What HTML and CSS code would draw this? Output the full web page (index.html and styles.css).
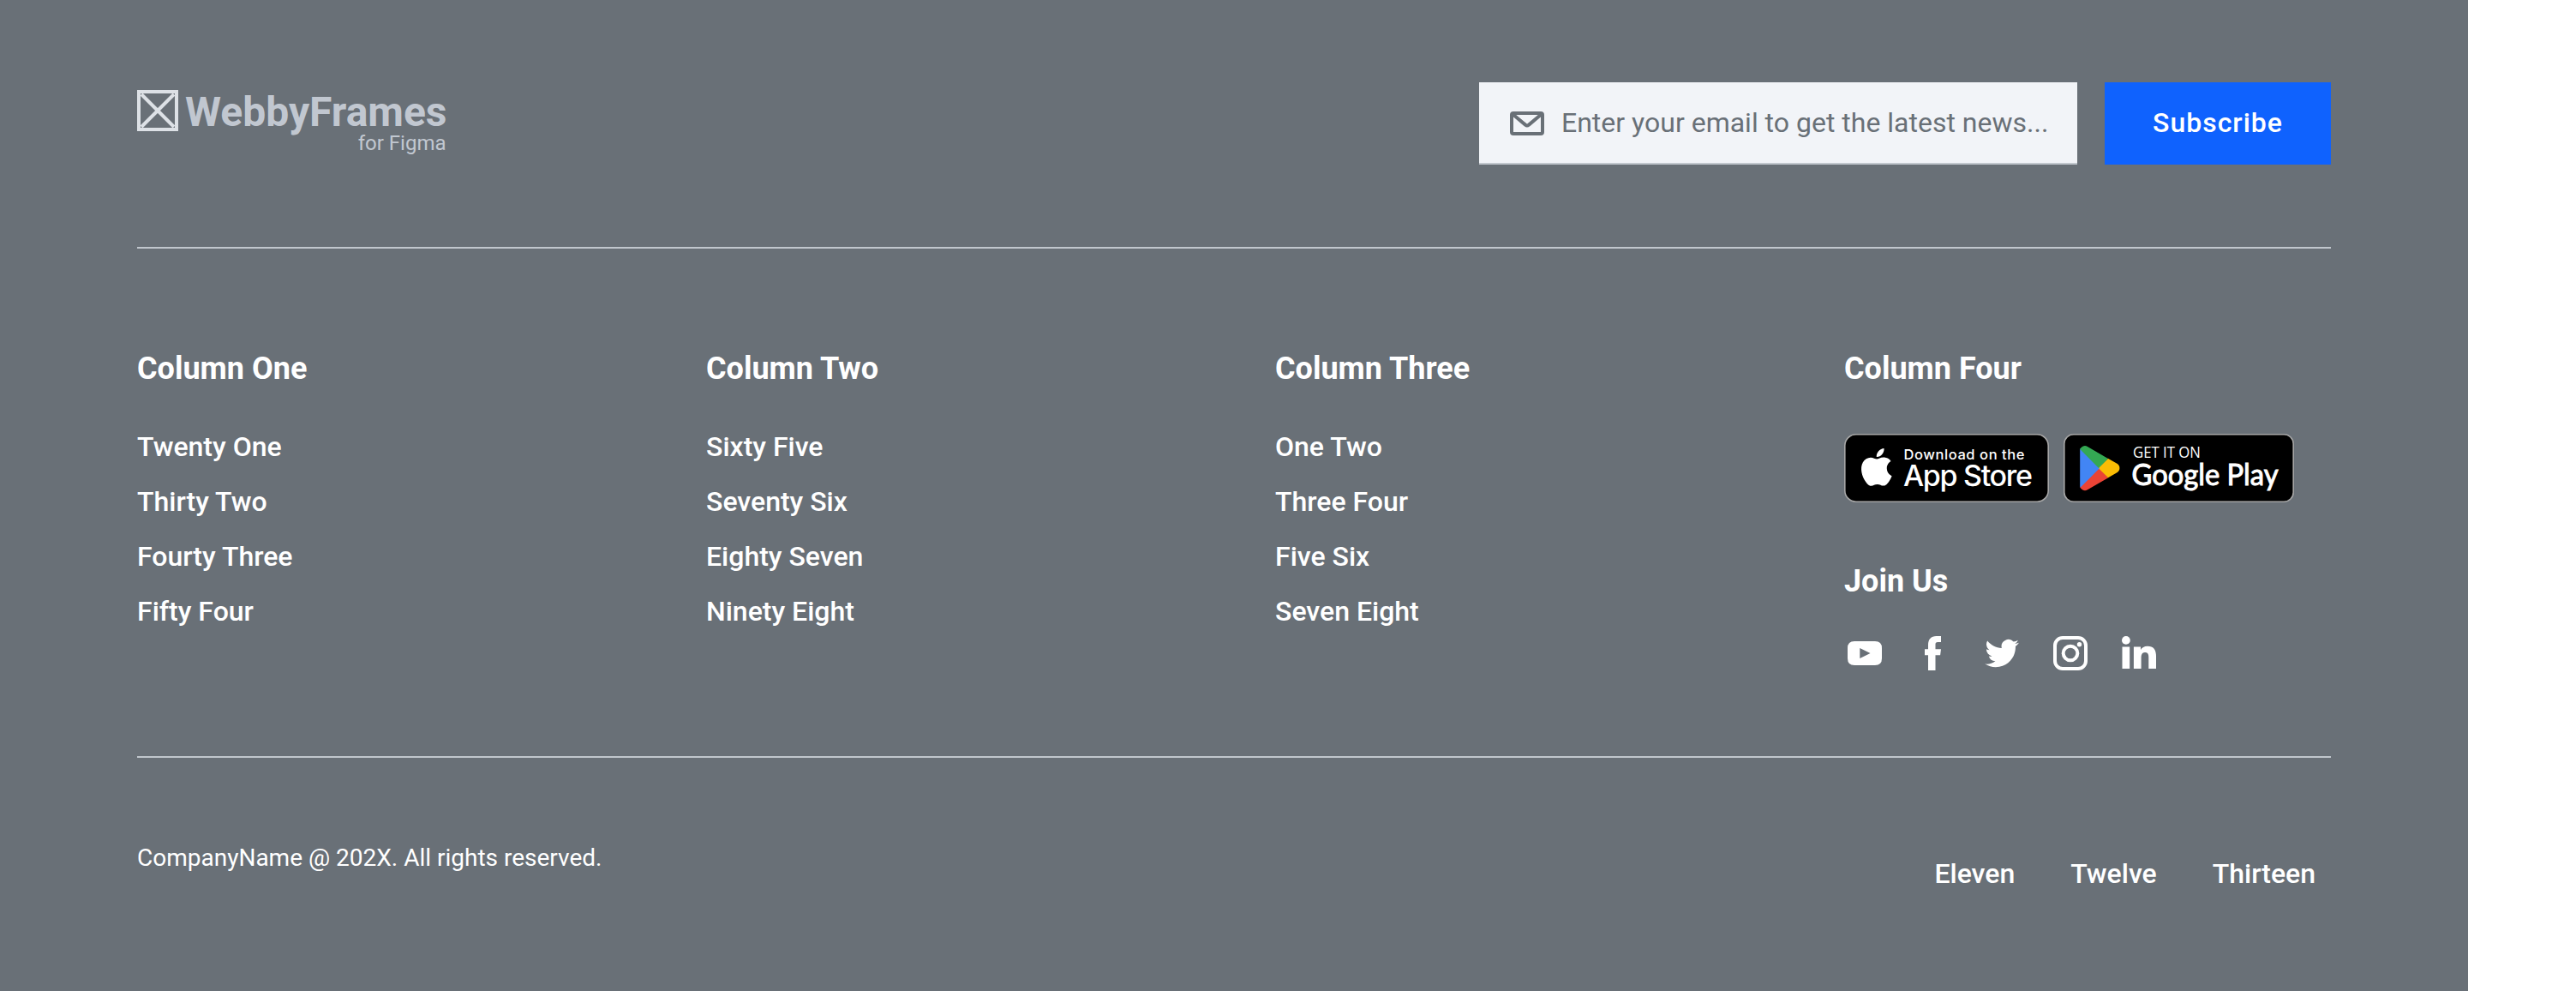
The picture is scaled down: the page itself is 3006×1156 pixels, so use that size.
FILE: index.html
```html
<!DOCTYPE html>
<html lang="en">
<head>
<meta charset="utf-8">
<title>WebbyFrames</title>
<link rel="stylesheet" href="styles.css">
</head>
<body>
<footer class="footer">
  <div class="footer-top">
    <a class="logo">
      <svg class="logo-mark" width="48" height="48" viewBox="0 0 48 48" fill="none" stroke="#dde1e6" stroke-width="4"><rect x="2" y="2" width="44" height="44"/><path d="M5 5l38 38M43 5L5 43"/></svg>
      <span class="logo-text">
        <span class="logo-name">WebbyFrames</span>
        <span class="logo-sub">for Figma</span>
      </span>
    </a>
    <form class="newsletter">
      <label class="field">
        <svg width="48" height="48" viewBox="0 0 48 48" fill="none" stroke="#697077" stroke-width="4" stroke-linejoin="round"><rect x="6" y="12" width="36" height="24" rx="2"/><path d="M7 13l15 12.600q2 1.500 4 0L41 13"/></svg>
        <span class="placeholder">Enter your email to get the latest news...</span>
      </label>
      <button class="subscribe" type="button">Subscribe</button>
    </form>
  </div>

  <div class="columns">
    <nav class="column">
      <h2 class="heading">Column One</h2>
      <ul class="links"><li>Twenty One</li><li>Thirty Two</li><li>Fourty Three</li><li>Fifty Four</li></ul>
    </nav>
    <nav class="column">
      <h2 class="heading">Column Two</h2>
      <ul class="links"><li>Sixty Five</li><li>Seventy Six</li><li>Eighty Seven</li><li>Ninety Eight</li></ul>
    </nav>
    <nav class="column">
      <h2 class="heading">Column Three</h2>
      <ul class="links"><li>One Two</li><li>Three Four</li><li>Five Six</li><li>Seven Eight</li></ul>
    </nav>
    <div class="column">
      <h2 class="heading">Column Four</h2>
      <div class="badges">
        <svg class="badge-apple" width="239" height="80" viewBox="0 0 239 80">
          <rect x=".8" y=".8" width="237.4" height="78.4" rx="13" fill="#000" stroke="#a6a6a6" stroke-width="1.6"/>
          <path transform="translate(16 17) scale(1.82)" fill="#fff" d="M12.152 6.896c-.948 0-2.415-1.078-3.96-1.04-2.04.027-3.91 1.183-4.961 3.014-2.117 3.675-.546 9.103 1.519 12.09 1.013 1.454 2.208 3.09 3.792 3.039 1.52-.065 2.09-.987 3.935-.987 1.831 0 2.35.987 3.96.948 1.637-.026 2.676-1.48 3.676-2.948 1.156-1.688 1.636-3.325 1.662-3.415-.039-.013-3.182-1.221-3.22-4.857-.026-3.04 2.48-4.494 2.597-4.559-1.429-2.09-3.623-2.324-4.39-2.376-2-.156-3.675 1.09-4.61 1.09zM15.53 3.83c.843-1.012 1.4-2.427 1.245-3.83-1.207.052-2.662.805-3.532 1.818-.78.896-1.454 2.338-1.273 3.714 1.338.104 2.715-.688 3.559-1.701"/>
          <text class="apple-small" x="69.500" y="29.700" textLength="141">Download on the</text>
          <text class="apple-big" x="69" y="61" textLength="151">App Store</text>
        </svg>
        <svg class="badge-google" width="269" height="80" viewBox="0 0 269 80">
          <rect x=".8" y=".8" width="267.4" height="78.4" rx="11" fill="#000" stroke="#a6a6a6" stroke-width="1.6"/>
          <path fill="#ea4335" d="M40.7 38.7L19.2 62a6 6 0 0 0 8.8 3.3L52.3 51.2z"/>
          <path fill="#fbbc04" d="M62.4 34.8L51.8 28.7 40.4 39.8 52 51.3l10.4-6.1a6 6 0 0 0 0-10.4z"/>
          <path fill="#4285f4" d="M19.6 17.1a6 6 0 0 0-.4 1.8v42.2l.4 1.6L42 40.2z"/>
          <path fill="#34a853" d="M41 40L52 28.900 28 14.900a6 6 0 0 0-8.800 3.200z"/>
          <text class="google-small" x="81" y="27.800" textLength="79" lengthAdjust="spacingAndGlyphs">GET IT ON</text>
          <text class="google-big" x="79.500" y="60" textLength="171" lengthAdjust="spacingAndGlyphs">Google Play</text>
        </svg>
      </div>
      <h2 class="heading">Join Us</h2>
      <div class="social">
        <svg viewBox="0 0 48 48"><path fill-rule="evenodd" d="M12 10h24q8 0 8 8v12q0 8-8 8H12q-8 0-8-8V18q0-8 8-8zm6.300 8v12L30.500 24z"/></svg>
        <svg viewBox="0 0 48 48"><path d="M18 44V26.200h-4V19.200h4v-4.700C18 7.500 21.500 4 27.500 4H33v7h-3.800c-2 0-2.700 1-2.700 2.800v5.400H33l-.9 7h-5.600V44z"/></svg>
        <svg viewBox="0 0 48 48"><path transform="translate(4.400 4.300) scale(1.65)" d="M23.953 4.570a10 10 0 01-2.825.775 4.958 4.958 0 002.163-2.723c-.951.555-2.005.959-3.127 1.184a4.920 4.920 0 00-8.384 4.482C7.690 8.095 4.067 6.130 1.640 3.162a4.822 4.822 0 00-.666 2.475c0 1.710.870 3.213 2.188 4.096a4.904 4.904 0 01-2.228-.616v.060a4.923 4.923 0 003.946 4.827 4.996 4.996 0 01-2.212.085 4.936 4.936 0 004.604 3.417 9.867 9.867 0 01-6.102 2.105c-.390 0-.779-.023-1.170-.067a13.995 13.995 0 007.557 2.209c9.053 0 13.998-7.496 13.998-13.985 0-.210 0-.420-.015-.630A9.935 9.935 0 0024 4.590z"/></svg>
        <svg viewBox="0 0 48 48"><g fill="none" stroke="#fff" stroke-width="4"><rect x="6" y="6" width="36" height="36" rx="9"/><circle cx="24" cy="24" r="8.300"/></g><circle cx="34.500" cy="13.700" r="2.700"/></svg>
        <svg viewBox="0 0 48 48"><circle cx="8.900" cy="8.900" r="4.900"/><path d="M4.500 16.500h8.700V42H4.500zM17.900 16.500H26V20c1.400-2.400 4.200-4.200 8-4.200 7.500 0 10 4.700 10 11.700V42h-8.700V29c0-3.500-.7-5.900-4.200-5.900-3.300 0-4.500 2.400-4.500 5.900v13h-8.700z"/></svg>
      </div>
    </div>
  </div>

  <div class="footer-bottom">
    <p class="copyright">CompanyName @ 202X. All rights reserved.</p>
    <nav class="legal"><a>Eleven</a><a>Twelve</a><a>Thirteen</a></nav>
  </div>
</footer>
</body>
</html>
```
FILE: styles.css
```css
* { box-sizing: border-box; }
body { margin: 0; background: #fff; font-family: Roboto, sans-serif; color: #fff; }
.footer { width: 2880px; height: 1156px; padding: 0 160px; background: #697077; }

.footer-top {
  display: flex;
  justify-content: space-between;
  align-items: flex-start;
  height: 290px;
  padding-top: 96px;
  border-bottom: 2px solid #c1c7cd;
}
.logo { display: flex; gap: 8px; padding-top: 9px; }
.logo-text { display: flex; flex-direction: column; align-items: flex-end; padding-top: 2px; color: #c1c7d0; }
.logo-name { font-size: 48px; line-height: 48px; font-weight: 700; }
.logo-sub { margin-top: -2px; padding-right: 1px; font-size: 24px; line-height: 28px; }

.newsletter { display: flex; gap: 32px; }
.field {
  display: flex;
  align-items: center;
  gap: 16px;
  width: 698px;
  height: 96px;
  padding: 2px 32px 0;
  background: #f2f4f8;
  border-bottom: 2px solid #c1c7cd;
}
.placeholder { padding-bottom: 2px; font-size: 32px; line-height: 44px; color: #697077; white-space: nowrap; }
.subscribe {
  width: 264px;
  height: 96px;
  padding: 0 0 2px;
  border: 0;
  background: #0f62fe;
  color: #fff;
  font: 500 32px/32px Roboto, sans-serif;
  letter-spacing: 1px;
}

.columns {
  display: grid;
  grid-template-columns: repeat(4, 1fr);
  column-gap: 96px;
  height: 594px;
  padding-top: 120px;
  border-bottom: 2px solid #c1c7cd;
}
.heading { margin: 0; font-size: 36px; line-height: 40px; font-weight: 700; }
.links { margin: 39px 0 0; padding: 0; list-style: none; font-size: 32px; line-height: 64px; font-weight: 500; }
.badges { display: flex; gap: 17px; margin: 56px 0 72px; }
.badges text { fill: #fff; }
.apple-small { font: 500 16.5px/1 Inter, sans-serif; }
.apple-big { font: 500 34px/1 Inter, sans-serif; }
.google-small { font: 500 18px/1 "Open Sans", sans-serif; }
.google-big { font: 400 35px/1 Lato, sans-serif; stroke: #fff; stroke-width: 1px; }
.social { display: flex; gap: 32px; margin-top: 40px; }
.social svg { width: 48px; height: 48px; fill: #fff; }

.footer-bottom { display: flex; justify-content: space-between; align-items: flex-start; padding-top: 96px; }
.copyright { margin: 0; font-size: 28px; line-height: 42px; }
.legal { display: flex; gap: 33px; padding: 19px 2px 0 0; font-size: 32px; line-height: 40px; font-weight: 500; }
.legal a { padding: 0 16px; }
```
